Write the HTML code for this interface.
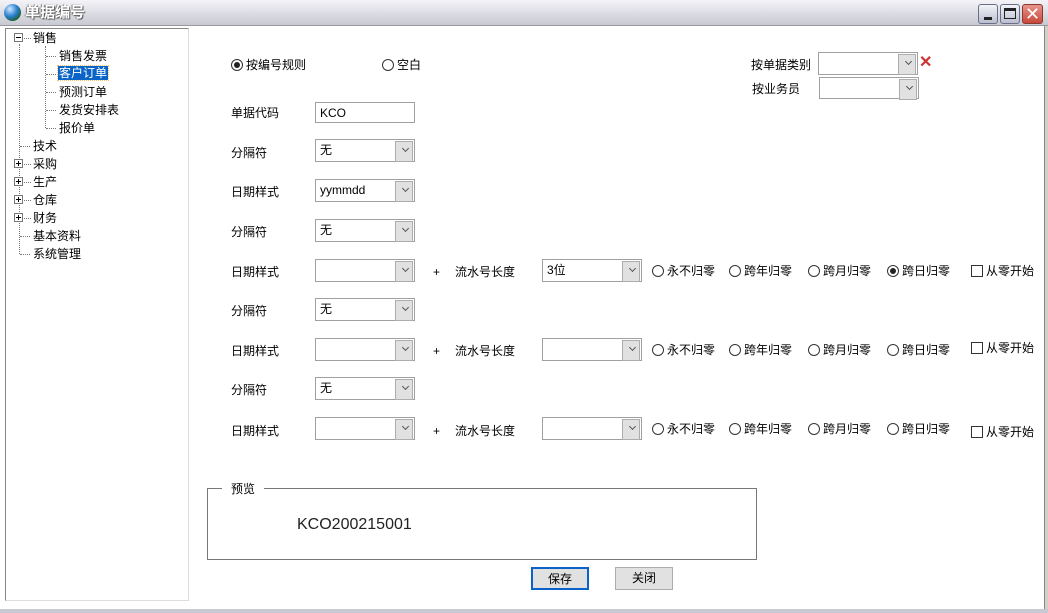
<!DOCTYPE html>
<html><head><meta charset="utf-8"><style>
*{margin:0;padding:0;box-sizing:border-box}
body{width:1048px;height:613px;background:#fff;position:relative;overflow:hidden;font-family:"Liberation Sans","Noto Sans CJK SC",sans-serif;font-size:12px;color:#000}
.a{position:absolute;white-space:nowrap;line-height:14px}
.sel{position:absolute;width:100px;height:23px;border:1px solid #a0a0a0;background:#fff;padding:2px 4px;line-height:17px}
.sel::after{content:"";position:absolute;right:1px;top:1px;width:16px;height:19px;background:#e1e1e1;border:1px solid #adadad}
.sel i{position:absolute;right:6px;top:6px;width:5px;height:5px;border-right:1px solid #555;border-bottom:1px solid #555;transform:rotate(45deg);z-index:2}
.r{position:absolute;width:12px;height:12px;border:1px solid #333;border-radius:50%;background:#fff}
.r.on::after{content:"";position:absolute;left:2px;top:2px;width:6px;height:6px;border-radius:50%;background:#222}
.cb{position:absolute;width:12px;height:12px;border:1px solid #333;background:#fff}
.tl{position:absolute;border-top:1px dotted #777;height:0;width:10px}
.vl{position:absolute;border-left:1px dotted #777;width:0}
.pm{position:absolute;width:9px;height:9px;border:1px solid #777;background:#fff}
.pm::before{content:"";position:absolute;left:1px;top:3px;width:5px;height:1px;background:#000}
.pm.p::after{content:"";position:absolute;left:3px;top:1px;width:1px;height:5px;background:#000}
.btn{position:absolute;height:23px;background:#e1e1e1;border:1px solid #adadad;text-align:center;line-height:20px}
</style></head><body>
<!-- title bar -->
<div style="position:absolute;left:0;top:0;width:1048px;height:26px;background:linear-gradient(#f4f4f8,#c8c9d2);border-bottom:1px solid #999"></div>
<div style="position:absolute;left:4px;top:4px;width:17px;height:17px;border-radius:50%;background:radial-gradient(circle at 35% 30%,#cfe8ff,#2a7fd0 45%,#1d5a20 80%)"></div>
<div class="a" style="left:25px;top:4px;font-size:15px;line-height:18px;font-weight:bold;color:#fff;text-shadow:1px 1px 1px #555,-1px 0 1px #777">单据编号</div>
<div style="position:absolute;left:978px;top:4px;width:20px;height:20px;border:1px solid #6a6f86;border-radius:3px;background:linear-gradient(#f2f3f8,#b9bdd0)"><div style="position:absolute;left:5px;top:12px;width:8px;height:3px;background:#222"></div></div>
<div style="position:absolute;left:1000px;top:4px;width:20px;height:20px;border:1px solid #6a6f86;border-radius:3px;background:linear-gradient(#f2f3f8,#b9bdd0)"><div style="position:absolute;left:3px;top:3px;width:12px;height:11px;border:1px solid #222;border-top-width:3px"></div></div>
<div style="position:absolute;left:1022px;top:4px;width:21px;height:20px;border:1px solid #8a3a30;border-radius:3px;background:linear-gradient(#e8948a,#c8483a);color:#fff;font-size:18px;line-height:18px;text-align:center">✕</div>
<div style="position:absolute;left:1044px;top:26px;width:4px;height:587px;background:#d4d0c8;border-left:1px solid #888"></div>
<div style="position:absolute;left:0;top:609px;width:1048px;height:4px;background:#c8c9d2"></div>
<!-- tree -->
<div style="position:absolute;left:5px;top:28px;width:184px;height:573px;border:1px solid #888;border-right-color:#ddd;border-bottom-color:#ddd"></div>
<div class="vl" style="left:19px;top:44px;height:210px"></div>
<div class="vl" style="left:45px;top:46px;height:82px"></div>
<div class="pm" style="left:14px;top:33px"></div>
<div class="tl" style="left:24px;top:38px;width:7px"></div>
<div class="a" style="left:33px;top:31px">销售</div>
<div class="tl" style="left:46px;top:56px"></div><div class="a" style="left:59px;top:49px">销售发票</div>
<div class="tl" style="left:46px;top:74px"></div><div class="a" style="left:58px;top:66px;background:#0a64c8;color:#fff;padding:0 1px;outline:1px dotted #f5c16b">客户订单</div>
<div class="tl" style="left:46px;top:92px"></div><div class="a" style="left:59px;top:85px">预测订单</div>
<div class="tl" style="left:46px;top:110px"></div><div class="a" style="left:59px;top:103px">发货安排表</div>
<div class="tl" style="left:46px;top:128px"></div><div class="a" style="left:59px;top:121px">报价单</div>
<div class="tl" style="left:20px;top:146px"></div><div class="a" style="left:33px;top:139px">技术</div>
<div class="pm p" style="left:14px;top:159px"></div><div class="tl" style="left:24px;top:164px;width:7px"></div><div class="a" style="left:33px;top:157px">采购</div>
<div class="pm p" style="left:14px;top:177px"></div><div class="tl" style="left:24px;top:182px;width:7px"></div><div class="a" style="left:33px;top:175px">生产</div>
<div class="pm p" style="left:14px;top:195px"></div><div class="tl" style="left:24px;top:200px;width:7px"></div><div class="a" style="left:33px;top:193px">仓库</div>
<div class="pm p" style="left:14px;top:213px"></div><div class="tl" style="left:24px;top:218px;width:7px"></div><div class="a" style="left:33px;top:211px">财务</div>
<div class="tl" style="left:20px;top:236px"></div><div class="a" style="left:33px;top:229px">基本资料</div>
<div class="tl" style="left:20px;top:254px"></div><div class="a" style="left:33px;top:247px">系统管理</div>
<!-- top radios -->
<div class="r on" style="left:231px;top:59px"></div><div class="a" style="left:246px;top:58px">按编号规则</div>
<div class="r" style="left:382px;top:59px"></div><div class="a" style="left:397px;top:58px">空白</div>
<div class="a" style="left:751px;top:58px">按单据类别</div>
<div class="sel" style="left:818px;top:52px"><i></i></div>
<div style="position:absolute;left:919px;top:54px;width:14px;height:18px;font-size:16px;line-height:18px;color:#c33;font-weight:bold">✕</div>
<div class="a" style="left:752px;top:82px">按业务员</div>
<div class="sel" style="left:819px;top:77px;height:22px"><i></i></div>
<!-- rows -->
<div class="a" style="left:231px;top:106px">单据代码</div>
<div style="position:absolute;left:315px;top:102px;width:100px;height:21px;border:1px solid #a0a0a0;padding:3px 4px;line-height:14px">KCO</div>
<div class="a" style="left:231px;top:146px">分隔符</div><div class="sel" style="left:315px;top:139px">无<i></i></div>
<div class="a" style="left:231px;top:185px">日期样式</div><div class="sel" style="left:315px;top:179px">yymmdd<i></i></div>
<div class="a" style="left:231px;top:225px">分隔符</div><div class="sel" style="left:315px;top:219px">无<i></i></div>

<div class="a" style="left:231px;top:265px">日期样式</div><div class="sel" style="left:315px;top:259px"><i></i></div>
<div class="a" style="left:433px;top:265px">+</div><div class="a" style="left:455px;top:265px">流水号长度</div>
<div class="sel" style="left:542px;top:259px">3位<i></i></div>
<div class="r" style="left:652px;top:265px"></div><div class="a" style="left:667px;top:264px">永不归零</div>
<div class="r" style="left:729px;top:265px"></div><div class="a" style="left:744px;top:264px">跨年归零</div>
<div class="r" style="left:808px;top:265px"></div><div class="a" style="left:823px;top:264px">跨月归零</div>
<div class="r on" style="left:887px;top:265px"></div><div class="a" style="left:902px;top:264px">跨日归零</div>
<div class="cb" style="left:971px;top:265px"></div><div class="a" style="left:986px;top:264px">从零开始</div>

<div class="a" style="left:231px;top:304px">分隔符</div><div class="sel" style="left:315px;top:298px">无<i></i></div>

<div class="a" style="left:231px;top:344px">日期样式</div><div class="sel" style="left:315px;top:338px"><i></i></div>
<div class="a" style="left:433px;top:344px">+</div><div class="a" style="left:455px;top:344px">流水号长度</div>
<div class="sel" style="left:542px;top:338px"><i></i></div>
<div class="r" style="left:652px;top:344px"></div><div class="a" style="left:667px;top:343px">永不归零</div>
<div class="r" style="left:729px;top:344px"></div><div class="a" style="left:744px;top:343px">跨年归零</div>
<div class="r" style="left:808px;top:344px"></div><div class="a" style="left:823px;top:343px">跨月归零</div>
<div class="r" style="left:887px;top:344px"></div><div class="a" style="left:902px;top:343px">跨日归零</div>
<div class="cb" style="left:971px;top:342px"></div><div class="a" style="left:986px;top:341px">从零开始</div>

<div class="a" style="left:231px;top:383px">分隔符</div><div class="sel" style="left:315px;top:377px">无<i></i></div>

<div class="a" style="left:231px;top:424px">日期样式</div><div class="sel" style="left:315px;top:417px"><i></i></div>
<div class="a" style="left:433px;top:424px">+</div><div class="a" style="left:455px;top:424px">流水号长度</div>
<div class="sel" style="left:542px;top:417px"><i></i></div>
<div class="r" style="left:652px;top:423px"></div><div class="a" style="left:667px;top:422px">永不归零</div>
<div class="r" style="left:729px;top:423px"></div><div class="a" style="left:744px;top:422px">跨年归零</div>
<div class="r" style="left:808px;top:423px"></div><div class="a" style="left:823px;top:422px">跨月归零</div>
<div class="r" style="left:887px;top:423px"></div><div class="a" style="left:902px;top:422px">跨日归零</div>
<div class="cb" style="left:971px;top:426px"></div><div class="a" style="left:986px;top:425px">从零开始</div>
<!-- preview -->
<div style="position:absolute;left:207px;top:488px;width:550px;height:72px;border:1px solid #777"></div>
<div class="a" style="left:222px;top:482px;background:#fff;padding:0 9px">预览</div>
<div class="a" style="left:297px;top:516px;font-size:16px;line-height:18px;color:#222">KCO200215001</div>
<div class="btn" style="left:531px;top:567px;width:58px;border:2px solid #0a64c8">保存</div>
<div class="btn" style="left:615px;top:567px;width:58px">关闭</div>
</body></html>
